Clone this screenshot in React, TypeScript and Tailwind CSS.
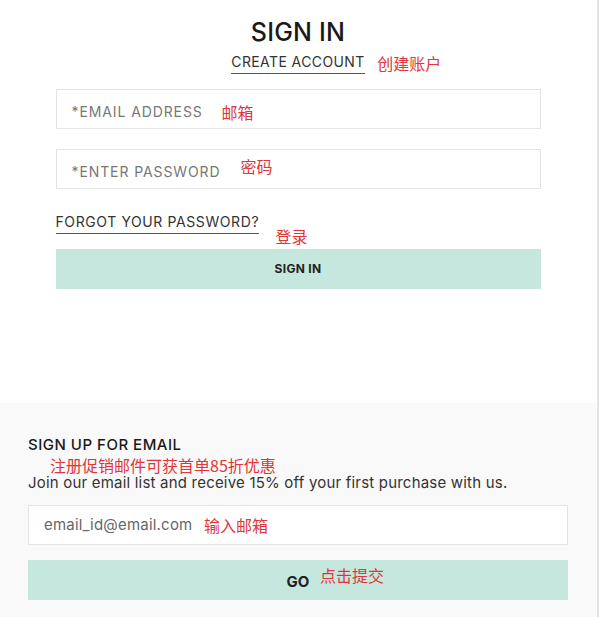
import React from 'react';

const cjk = "font-['Noto_Sans_CJK_SC',sans-serif]";

function Note({ children, className }: { children: React.ReactNode; className: string }) {
  return (
    <span className={`absolute whitespace-nowrap text-[16px] leading-none text-[#e0363a] ${cjk} ${className}`}>
      {children}
    </span>
  );
}

export default function App() {
  return (
    <div className="flex h-[617px] w-[600px] overflow-hidden bg-white font-['Inter',sans-serif] text-[#222]">
      <div className="flex w-[596px] flex-col">
        {/* sign in */}
        <div className="flex h-[403px] flex-col items-center pt-[18px]">
          <h1 className="text-[25px] font-medium leading-[29px] tracking-[0.2px] text-[#1a1a1a]">SIGN IN</h1>
          <div className="relative mt-[6px]">
            <a className="block border-b border-[#555] pb-[2px] text-[14px] leading-[18px] tracking-[0.4px] text-[#333]">
              CREATE ACCOUNT
            </a>
            <Note className="left-[146px] top-[2px]">创建账户</Note>
          </div>

          <div className="mt-[15px] flex w-[485px] flex-col">
            <div className="relative flex h-[40px] items-center border border-[#e4e4e4] px-[15px] pt-[5px]">
              <span className="text-[14px] tracking-[0.9px] text-[#777]">*EMAIL ADDRESS</span>
              <Note className="left-[165px] top-[14px]">邮箱</Note>
            </div>
            <div className="relative mt-[20px] flex h-[40px] items-center border border-[#e4e4e4] px-[15px] pt-[5px]">
              <span className="text-[14px] tracking-[0.9px] text-[#777]">*ENTER PASSWORD</span>
              <Note className="left-[184px] top-[8px]">密码</Note>
            </div>

            <div className="relative mt-[24px] self-start">
              <a className="block border-b border-[#555] pb-[2px] text-[14px] leading-[18px] tracking-[0.6px] text-[#333]">
                FORGOT YOUR PASSWORD?
              </a>
              <Note className="left-[220px] top-[15px]">登录</Note>
            </div>

            <button className="mt-[15px] h-[40px] w-full bg-[#c6e7de] text-[12px] font-bold tracking-[0.3px] text-[#222]">
              SIGN IN
            </button>
          </div>
        </div>

        {/* email sign up */}
        <div className="flex flex-1 flex-col bg-[#f9f9f9] px-[28px] pt-[32px]">
          <h2 className="text-[15px] font-medium leading-[20px] tracking-[0.5px] text-[#1a1a1a]">SIGN UP FOR EMAIL</h2>
          <p className={`ml-[22px] mt-[1px] text-[16px] leading-[18px] text-[#e0363a] ${cjk}`}>
            注册促销邮件可获首单85折优惠
          </p>
          <p className="text-[15px] leading-[18px] tracking-[0.2px] text-[#333]">
            Join our email list and receive 15% off your first purchase with us.
          </p>

          <div className="relative mt-[13px] flex h-[40px] w-[540px] items-center border border-[#e4e4e4] bg-white px-[15px]">
            <span className="text-[15px] tracking-[0.2px] text-[#666]">email_id@email.com</span>
            <Note className="left-[175px] top-[11px]">输入邮箱</Note>
          </div>

          <div className="relative mt-[15px] flex h-[40px] w-[540px] items-center justify-center bg-[#c6e7de] pt-[4px]">
            <span className="text-[15px] font-bold text-[#222]">GO</span>
            <Note className="left-[292px] top-[7px]">点击提交</Note>
          </div>
        </div>
      </div>
      <div className="ml-[1px] w-[2px] bg-[#e2e2e2]" />
    </div>
  );
}
